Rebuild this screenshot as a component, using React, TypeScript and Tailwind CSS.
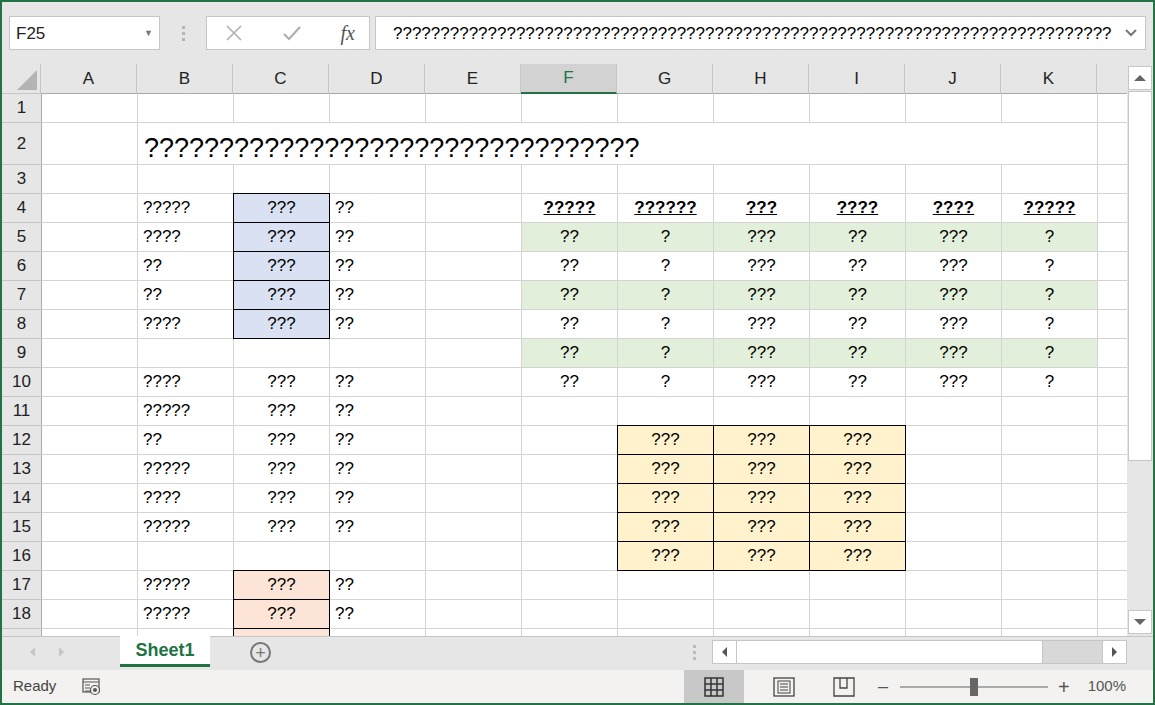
import React from "react";

const COLS = ["A","B","C","D","E","F","G","H","I","J","K"];
type Cell = { t?: string; bg?: string; box?: boolean; align?: "l"|"c"; bold?: boolean };

function rowData(r: number): Record<string, Cell> {
  const d: Record<string, Cell> = {};
  const bText: Record<number,string> = {4:"?????",5:"????",6:"??",7:"??",8:"????",10:"????",11:"?????",12:"??",13:"?????",14:"????",15:"?????",17:"?????",18:"?????"};
  if (bText[r]) d.B = { t: bText[r], align: "l" };
  if (r >= 4 && r <= 8) d.C = { t: "???", bg: "bg-[#d9e1f2]", box: true, align: "c" };
  if (r >= 10 && r <= 15) d.C = { t: "???", align: "c" };
  if (r >= 17) d.C = { t: "???", bg: "bg-[#fce4d6]", box: true, align: "c" };
  if (bText[r]) d.D = { t: "??", align: "l" };
  if (r === 4) {
    ["?????","??????","???","????","????","?????"].forEach((t,i)=>{ d[COLS[5+i]] = { t, bold: true, align: "c" }; });
  }
  if (r >= 5 && r <= 10) {
    const g = r % 2 === 1 ? "bg-[#e2efda]" : undefined;
    ["??","?","???","??","???","?"].forEach((t,i)=>{ d[COLS[5+i]] = { t, bg: g, align: "c" }; });
  }
  if (r >= 12 && r <= 16) {
    ["G","H","I"].forEach(c=>{ d[c] = { t: "???", bg: "bg-[#fff2cc]", box: true, align: "c" }; });
  }
  return d;
}

const font = { fontFamily: '"Liberation Sans", Arial, sans-serif' };

export default function App() {
  const rows = Array.from({ length: 19 }, (_, i) => i + 1);
  return (
    <div className="w-[1155px] h-[705px] bg-[#e6e6e6] border-2 border-[#217346] flex flex-col overflow-hidden text-black" style={font}>
      {/* formula bar */}
      <div className="h-[62px] flex items-center gap-0 px-[7px] pt-[1px]">
        <div className="w-[151px] h-[34px] bg-white border border-[#c6c6c6] flex items-center justify-between px-[6px] text-[17px] text-[#222]">
          <span>F25</span>
          <span className="text-[9px] text-[#777]">▼</span>
        </div>
        <div className="w-[46px] flex flex-col items-center gap-[3px]">
          <span className="w-[3px] h-[3px] bg-[#b5b5b5]" />
          <span className="w-[3px] h-[3px] bg-[#b5b5b5]" />
          <span className="w-[3px] h-[3px] bg-[#b5b5b5]" />
        </div>
        <div className="w-[164px] h-[34px] bg-white border border-[#c6c6c6] flex items-center justify-between pl-[18px] pr-[14px]">
          <svg width="18" height="18" viewBox="0 0 18 18"><path d="M2 2L16 16M16 2L2 16" stroke="#b0b0b0" strokeWidth="1.6"/></svg>
          <svg width="20" height="18" viewBox="0 0 20 18"><path d="M2 10L7 15L18 3" stroke="#b0b0b0" strokeWidth="2.2" fill="none"/></svg>
          <span className="italic text-[20px] text-[#555]" style={{ fontFamily: '"Liberation Serif", serif' }}>fx</span>
        </div>
        <div className="ml-[5px] flex-1 h-[34px] bg-white border border-[#c6c6c6] flex items-center justify-between pl-[17px] pr-[8px] text-[17px]">
          <span className="whitespace-nowrap overflow-hidden">{"?".repeat(76)}</span>
          <svg width="12" height="8" viewBox="0 0 12 8"><path d="M1 1L6 6L11 1" stroke="#777" strokeWidth="2" fill="none"/></svg>
        </div>
      </div>
      {/* grid + vscroll */}
      <div className="flex h-[574px] overflow-hidden bg-white">
        <div className="flex-1 overflow-hidden">
          <div className="flex h-[30px] bg-[#e6e6e6] text-[17px] text-[#222]">
            <div className="w-[40px] border-r border-b border-[#c6c6c6] relative">
              <div className="absolute right-[3px] bottom-[3px] w-0 h-0 border-l-[20px] border-l-transparent border-b-[20px] border-b-[#b4b4b4]" />
            </div>
            {COLS.map(c => (
              <div key={c} className={`w-[96px] shrink-0 flex items-center justify-center border-r border-[#c6c6c6] ${c === "F" ? "bg-[#d2d2d2] border-b-2 border-b-[#217346] text-[#217346]" : "border-b border-b-[#ababab]"}`}>{c}</div>
            ))}
            <div className="w-[30px] shrink-0 border-b border-[#ababab]" />
          </div>
          {rows.map(r => {
            const d = rowData(r);
            return (
              <div key={r} className={`flex ${r === 2 ? "h-[42px]" : "h-[29px]"}`}>
                <div className="w-[40px] shrink-0 bg-[#e6e6e6] border-r border-[#ababab] border-b border-b-[#c6c6c6] flex items-center justify-center text-[17px] text-[#222]">{r}</div>
                {COLS.map(c => {
                  const cell = d[c];
                  if (r === 2 && c === "B") {
                    return <div key={c} className="w-[96px] shrink-0 border-b border-[#d4d4d4] relative"><span className="absolute left-[6px] top-[5px] text-[27px] whitespace-nowrap">{"?".repeat(33)}</span></div>;
                  }
                  const noRight = r === 2 && c !== "A" && c !== "K";
                  return (
                    <div key={c} className={`w-[96px] shrink-0 flex items-center text-[17px] ${cell?.bg ?? ""} ${cell?.box ? "border border-black -mt-[1px] -ml-[1px] w-[97px] relative z-10" : `border-b border-[#d4d4d4] ${noRight ? "" : "border-r"}`} ${cell?.align === "c" ? "justify-center" : "pl-[5px]"}`}>
                      {cell?.t && <span className={cell.bold ? "font-bold underline" : ""}>{cell.t}</span>}
                    </div>
                  );
                })}
                <div className="w-[30px] shrink-0 border-b border-[#d4d4d4]" />
              </div>
            );
          })}
        </div>
        <div className="w-[26px] bg-[#e6e6e6] flex flex-col items-center pt-[2px] pb-[2px]">
          <div className="w-[24px] h-[24px] bg-white border border-[#c6c6c6] flex items-center justify-center"><span className="w-0 h-0 border-l-[6px] border-r-[6px] border-b-[6px] border-transparent border-b-[#666]" /></div>
          <div className="w-[24px] h-[370px] bg-white border border-[#c6c6c6] mt-[1px]" />
          <div className="flex-1" />
          <div className="w-[24px] h-[24px] bg-white border border-[#c6c6c6] flex items-center justify-center"><span className="w-0 h-0 border-l-[6px] border-r-[6px] border-t-[6px] border-transparent border-t-[#666]" /></div>
        </div>
      </div>
      {/* sheet tabs */}
      <div className="h-[34px] flex items-start bg-[#e6e6e6] border-t border-[#c6c6c6]">
        <div className="w-[118px] h-[30px] flex items-center gap-[24px] pl-[28px]">
          <span className="w-0 h-0 border-t-[5px] border-b-[5px] border-r-[5px] border-transparent border-r-[#c6c6c6]" />
          <span className="w-0 h-0 border-t-[5px] border-b-[5px] border-l-[5px] border-transparent border-l-[#c6c6c6]" />
        </div>
        <div className="w-[90px] h-[31px] -mt-[1px] bg-white border-b-[3px] border-[#217346] flex items-center justify-center font-bold text-[18px] text-[#217346]">Sheet1</div>
        <div className="ml-[40px] mt-[5px] w-[21px] h-[21px] rounded-full border-2 border-[#777] flex items-center justify-center text-[#777] text-[18px] leading-none">+</div>
        <div className="ml-auto mr-[26px] flex items-center h-[30px]">
          <div className="flex flex-col gap-[3px] mr-[16px]"><span className="w-[3px] h-[3px] bg-[#bbb]"/><span className="w-[3px] h-[3px] bg-[#bbb]"/><span className="w-[3px] h-[3px] bg-[#bbb]"/></div>
          <div className="w-[415px] h-[24px] bg-[#d8d8d8] border border-[#c6c6c6] flex">
            <div className="w-[24px] bg-white border-r border-[#c6c6c6] flex items-center justify-center"><span className="w-0 h-0 border-t-[5px] border-b-[5px] border-r-[5px] border-transparent border-r-[#555]" /></div>
            <div className="w-[306px] bg-white border-r border-[#c6c6c6]" />
            <div className="flex-1" />
            <div className="w-[24px] bg-white border-l border-[#c6c6c6] flex items-center justify-center"><span className="w-0 h-0 border-t-[5px] border-b-[5px] border-l-[5px] border-transparent border-l-[#555]" /></div>
          </div>
        </div>
      </div>
      {/* status bar */}
      <div className="h-[33px] bg-[#f3f2f1] flex items-center text-[15px] text-[#444]">
        <span className="ml-[11px]">Ready</span>
        <svg className="ml-[26px]" width="20" height="20" viewBox="0 0 20 20"><rect x="1" y="2" width="16" height="13" fill="none" stroke="#555" strokeWidth="1.2"/><path d="M1 5H17M3 8H8M3 11H8M3 14H8" stroke="#555"/><circle cx="13" cy="13" r="4.5" fill="#f3f2f1" stroke="#555" strokeWidth="1.2"/><circle cx="13" cy="13" r="2" fill="#555"/></svg>
        <div className="ml-auto flex items-center h-full">
          <div className="w-[60px] h-full bg-[#c8c8c8] flex items-center justify-center">
            <svg width="20" height="20" viewBox="0 0 20 20"><rect x="1" y="1" width="18" height="18" fill="none" stroke="#333" strokeWidth="1.5"/><path d="M7 1V19M13 1V19M1 7H19M1 13H19" stroke="#333" strokeWidth="1.5"/></svg>
          </div>
          <div className="w-[80px] flex justify-center">
            <svg width="22" height="20" viewBox="0 0 22 20"><rect x="1" y="1" width="20" height="18" fill="none" stroke="#444" strokeWidth="1.3"/><rect x="5" y="4" width="12" height="12" fill="none" stroke="#444"/><path d="M7 7H15M7 10H15M7 13H15" stroke="#444"/></svg>
          </div>
          <div className="w-[40px] flex justify-center">
            <svg width="22" height="20" viewBox="0 0 22 20"><path d="M1 1H21V19H1Z M7 1V11H14V1" fill="none" stroke="#444" strokeWidth="1.3"/></svg>
          </div>
          <span className="ml-[14px] text-[#555] text-[18px]">–</span>
          <div className="ml-[12px] w-[148px] h-[2px] bg-[#aaa] relative">
            <div className="absolute left-[70px] -top-[8px] w-[8px] h-[18px] bg-[#666]" />
          </div>
          <span className="ml-[10px] text-[#555] text-[20px]">+</span>
          <span className="ml-[18px] mr-[27px] text-[#555]">100%</span>
        </div>
      </div>
    </div>
  );
}
